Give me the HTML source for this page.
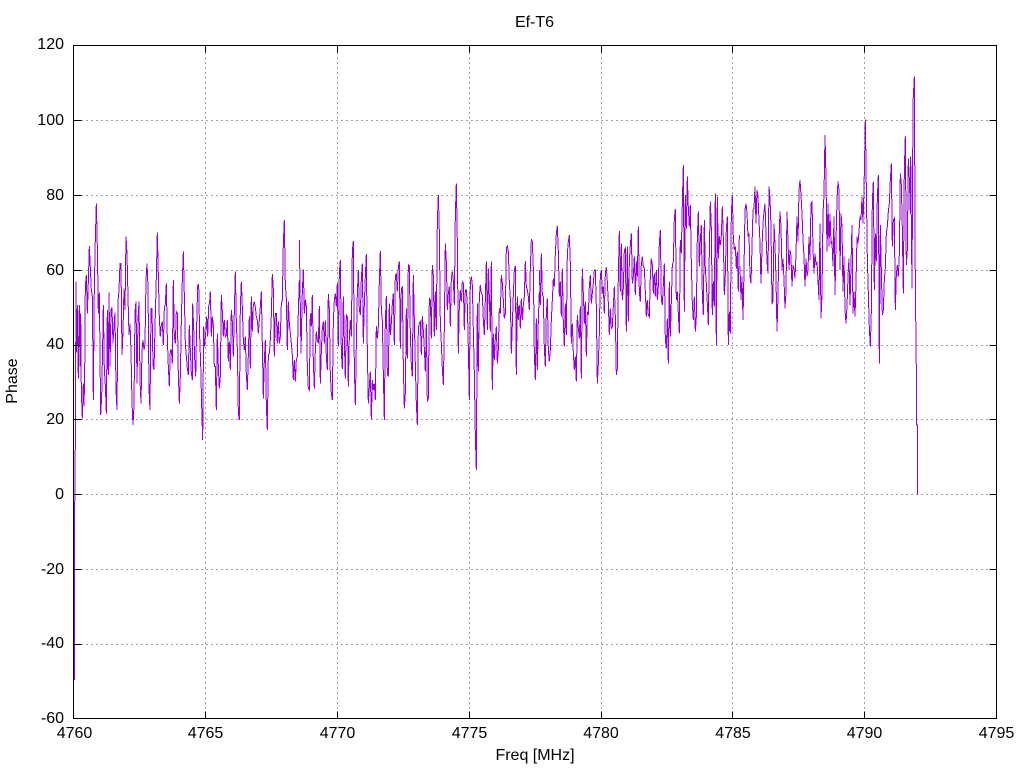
<!DOCTYPE html>
<html><head><meta charset="utf-8"><title>Ef-T6</title>
<style>html,body{margin:0;padding:0;background:#fff;width:1024px;height:768px;overflow:hidden}svg{display:block}text{font-family:"Liberation Sans",sans-serif;font-size:16px;fill:#000}</style>
</head><body>
<svg width="1024" height="768" viewBox="0 0 1024 768" xmlns="http://www.w3.org/2000/svg">
<rect width="1024" height="768" fill="#fff"/>
<g shape-rendering="crispEdges" fill="none">
<path stroke="#a0a0a0" stroke-width="1" stroke-dasharray="2 3" d="M205.5 52V711M337.5 52V711M469.5 52V711M601.5 52V711M732.5 52V711M864.5 52V711M81 644.5H989M81 569.5H989M81 494.5H989M81 419.5H989M81 345.5H989M81 270.5H989M81 195.5H989M81 120.5H989"/>
<g stroke="#9400d3" stroke-width="1" stroke-linejoin="miter">
<path d="M74.5 680V555L75 450"/>
<path transform="translate(60 200) scale(.33333)" stroke-width="3" d="M46 750 48 245 50 458 52 315 55 535 58 315 60 500 62 340 64 575 67 655 70 550 72 620 74 525 76 258 79 225 82 340 85 245 88 138 91 205 94 270 97 290 100 600 103 258 106 118 109 10 112 140 115 340 118 277 120 460 122 645 125 590 128 432 130 315 133 510 136 555 139 640 142 330 145 525 147 277 150 500 153 330 156 322 159 430 162 375 165 338 168 570 171 630 174 305 177 270 180 190 183 190 186 465 189 395 192 265 195 330 198 110 201 162 204 290 207 405 210 370 213 455 216 605 219 675 222 615 225 335 228 305 231 550 234 360 237 305 240 540 243 610 246 450 249 420 252 450 255 430 258 240 261 190 264 260 267 565 270 630 273 325 276 325 279 495 282 510 285 385 289 230 292 97 295 225 298 355 301 410 304 375 307 365 310 435 313 325 316 312 319 250 322 415 325 500 328 560 331 450 334 450 337 490 340 240 343 410 346 430 349 335 352 340 355 525 358 610 361 530 364 365 367 240 370 155 373 285 376 430 379 470 382 505 385 525 388 375 391 450 394 520 397 540 398 310 401 385 404 475 407 530 410 375 413 258 416 252 419 410 422 490 425 615 428 720 431 380 434 440 437 400 440 350 443 410 446 320 449 305 451 275 454 410 457 350 460 375 463 500 466 500 469 630 472 400 475 500 478 565 481 530 484 285 487 335 490 410 493 360 496 410 499 405 502 360 505 485 508 425 511 510 514 330 517 365 520 470 523 335 526 215 529 365 532 445 535 635 538 660 541 320 544 245 547 320 550 420 553 450 556 410 559 525 562 570 565 465 568 350 571 505 574 290 577 395 580 315 583 305 586 320 589 350 592 360 595 400 598 360 601 320 604 275 607 435 610 595 613 480 616 420 619 615 622 690 625 465 628 460 631 420 634 345 637 222 640 265 643 470 646 340 649 340 652 430 655 365 658 430 661 410 664 312 667 300 670 130 673 60 676 255 679 295 682 450 685 305 688 370 691 400 694 430 697 465 700 540 703 480 706 545 709 480 712 470 715 335 718 240"/>
<path transform="translate(300 180) scale(.33333)" stroke-width="3" d="M-2 180 3 520 7 335 10 268 13 400 16 358 19 380 22 560 25 625 28 630 31 400 34 440 37 345 40 545 43 625 46 510 49 455 52 480 55 490 58 378 61 610 64 515 67 445 70 425 73 490 76 422 79 530 82 570 85 342 88 388 91 585 94 640 97 660 100 425 103 360 106 340 109 380 112 310 115 500 118 280 121 240 124 515 127 567 130 350 133 480 136 595 139 405 142 410 145 620 148 470 151 420 154 470 157 215 160 183 163 560 166 675 169 495 172 340 175 270 178 390 181 405 184 295 187 250 190 490 193 372 196 290 199 222 202 515 205 670 208 620 211 575 214 718 217 600 220 630 223 610 226 660 229 438 232 475 235 440 238 305 241 213 244 390 247 420 250 580 253 720 256 425 259 348 262 580 265 590 268 370 271 465 274 430 277 372 280 340 283 495 286 285 289 282 292 335 295 262 298 245 301 505 304 325 307 322 310 555 313 685 316 640 319 385 322 535 325 255 328 258 331 460 334 555 337 590 340 285 343 420 346 555 349 670 352 735 355 445 358 430 361 425 364 525 367 408 370 450 373 505 376 575 379 432 382 665 385 655 388 355 391 360 394 475 397 255 400 285 403 470 406 335 409 450 412 125 415 45 418 155 421 430 424 490 427 565 430 615 433 445 436 190 439 245 442 390 445 340 448 320 451 440 454 295 457 275 460 300 463 375 466 105 469 10 472 185 475 520 478 380 481 330 484 365 487 305 490 310 493 450 496 330 499 330 502 375 505 500 508 660 511 305 514 290 517 315 520 450 523 580 526 765 529 870 532 370 535 575 538 350 541 315 544 340 547 345 550 420 553 465 556 360 559 245 562 450 565 265 568 350 571 455 574 245 577 630 580 460 583 540 586 475 589 440 592 550 595 510 598 385 601 400 604 285 607 310 610 360 613 415 616 400 619 205 622 198 625 215 628 305 631 355 634 520 637 435 640 345 643 270 646 258 649 585 652 350 655 420 658 375 661 445 664 355 667 420 670 375 673 350 676 243 679 320 682 330 685 350 688 390 691 265 694 178 697 185 700 265 703 520 706 600 709 415 712 570 715 420 718 335"/>
<path transform="translate(540 150) scale(.33333)" stroke-width="3" d="M-2 360 1 465 4 310 7 435 10 440 13 595 16 650 19 490 22 445 25 600 28 635 31 600 34 510 37 450 40 385 43 410 46 310 49 250 52 228 55 305 58 440 61 395 64 500 67 355 70 520 73 590 76 460 79 555 82 310 85 275 88 255 91 340 94 580 97 520 100 610 103 660 106 620 109 695 112 495 115 535 118 565 121 470 124 685 127 355 130 430 133 520 136 455 139 620 142 485 145 495 148 410 151 375 154 460 157 430 160 400 163 360 166 360 169 470 172 700 175 640 178 550 181 375 184 360 187 430 190 410 193 490 196 370 199 352 202 395 205 460 208 555 211 475 214 535 217 530 220 470 223 410 226 500 229 675 232 655 235 375 238 243 241 425 244 280 247 450 250 415 253 300 256 295 259 545 262 290 265 515 268 335 271 285 274 250 277 400 280 380 283 320 286 435 289 335 292 380 295 230 298 425 301 455 304 340 307 320 310 350 313 355 316 425 319 500 322 450 325 495 328 500 331 380 334 325 337 345 340 430 343 370 346 440 349 360 352 450 355 410 358 280 361 240 364 450 367 465 370 405 373 340 376 570 379 595 382 505 385 640 388 395 391 560 394 455 397 345 400 335 403 205 406 177 409 450 412 425 415 490 418 550 421 270 424 310 427 160 430 45 433 485 436 135 439 235 442 80 445 175 448 230 451 165 454 340 457 460 460 510 463 440 466 545 469 500 472 260 475 185 478 350 481 270 484 225 487 435 490 495 493 210 496 360 499 400 502 460 505 525 508 305 511 155 514 235 517 495 520 395 523 470 526 130 529 585 532 140 535 325 538 258 541 285 544 258 547 170 550 265 553 435 556 375 559 235 562 200 565 585 568 485 571 550 574 190 577 135 580 265 583 300 586 290 589 355 592 305 595 425 598 255"/>
<path transform="translate(730 70) scale(.33333)" stroke-width="3" d="M30 590 33 690 36 620 39 750 42 600 45 420 48 400 51 430 54 500 57 490 60 620 63 640 66 530 69 420 72 415 75 350 78 460 81 360 84 380 87 450 90 520 93 640 96 535 99 460 102 425 105 400 108 490 111 575 114 610 117 350 120 385 123 470 126 700 129 695 132 460 135 525 138 625 141 785 144 675 147 515 150 425 153 470 156 600 159 565 162 630 165 715 168 665 171 425 174 515 177 600 180 540 183 560 186 650 189 585 192 595 195 625 198 550 201 440 204 515 207 360 210 330 213 375 216 430 219 510 222 560 225 650 228 565 231 620 234 600 237 500 240 570 243 400 246 395 249 535 252 610 255 550 258 585 261 575 264 630 267 690 270 460 273 745 276 675 279 430 282 375 285 195 288 325 291 545 294 400 297 530 300 430 303 520 306 515 309 590 312 440 315 675 318 515 321 390 324 335 327 360 330 600 333 430 336 470 339 665 342 560 345 720 348 760 351 710 354 620 357 565 360 705 363 585 366 465 369 730 372 665 375 740 378 640 381 500 384 520 387 485 390 440 393 450 396 380 399 460 402 360 405 205 406 148 409 355 412 565 415 670 418 775 421 830 424 725 427 395 430 335 433 660 436 490 439 575 442 385 445 315 448 880 451 465 454 600 457 735 460 720 463 630 466 595 469 490 472 470 475 425 478 400 481 330 484 280 487 530 490 450 493 445 496 720 499 615 502 585 505 620 508 555 511 310 514 345 517 475 520 670 523 300 526 198 529 585 532 540 535 265 538 325 541 430 542 260 546 655 549 100 553 20 556 645 559 900 559 1065 562 1065 562 1273"/>
</g>
<path stroke="#000" stroke-width="1" d="M73.5 45.5H996.5V718.5H73.5ZM73.5 644.5h8M73.5 569.5h8M73.5 494.5h8M73.5 419.5h8M73.5 345.5h8M73.5 270.5h8M73.5 195.5h8M73.5 120.5h8M996.5 644.5h-7M996.5 569.5h-7M996.5 494.5h-7M996.5 419.5h-7M996.5 345.5h-7M996.5 270.5h-7M996.5 195.5h-7M996.5 120.5h-7M205.5 718.5v-7M337.5 718.5v-7M469.5 718.5v-7M601.5 718.5v-7M732.5 718.5v-7M864.5 718.5v-7M205.5 45.5v7M337.5 45.5v7M469.5 45.5v7M601.5 45.5v7M732.5 45.5v7M864.5 45.5v7"/>
</g>
<g text-anchor="end">
<text x="64" y="49">120</text>
<text x="64" y="125">100</text>
<text x="64" y="200">80</text>
<text x="64" y="275">60</text>
<text x="64" y="349">40</text>
<text x="64" y="424">20</text>
<text x="64" y="499">0</text>
<text x="64" y="574">-20</text>
<text x="64" y="648">-40</text>
<text x="64" y="723">-60</text>
</g>
<g text-anchor="middle">
<text x="74.5" y="738">4760</text>
<text x="205.5" y="738">4765</text>
<text x="337.5" y="738">4770</text>
<text x="469.5" y="738">4775</text>
<text x="601" y="738">4780</text>
<text x="733" y="738">4785</text>
<text x="864.5" y="738">4790</text>
<text x="996.5" y="738">4795</text>
<text x="534.5" y="27">Ef-T6</text>
<text x="535" y="760">Freq [MHz]</text>
<text transform="translate(17 381) rotate(-90)">Phase</text>
</g>
</svg>
</body></html>
